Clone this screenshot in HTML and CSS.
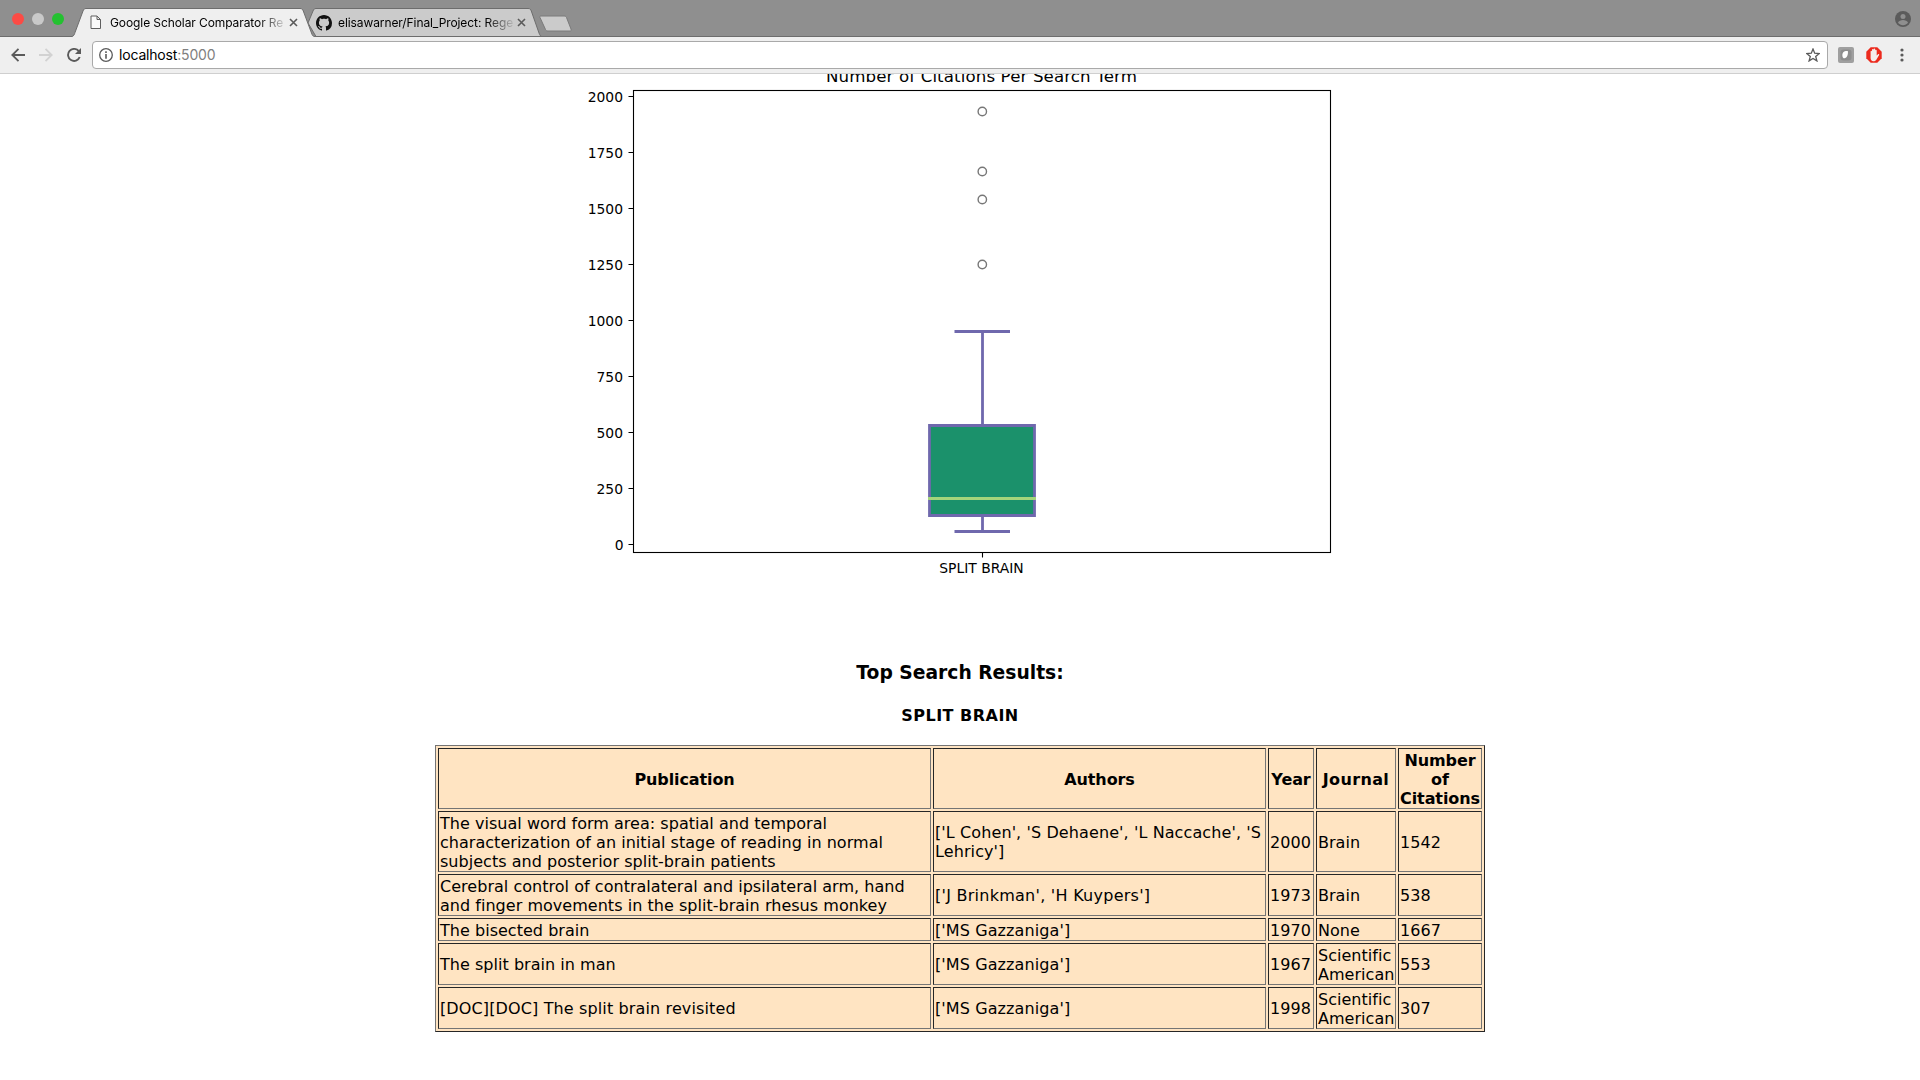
FILE: index.html
```html
<!DOCTYPE html>
<html lang="en">
<head>
<meta charset="utf-8">
<title>Google Scholar Comparator Results</title>
<link rel="stylesheet" href="styles.css">
</head>
<body>
<header class="browser">
  <div class="tabstrip">
    <div class="lights"><i class="light red"></i><i class="light grey"></i><i class="light green"></i></div>
    <div class="tab tab-active">
      <svg class="tab-shape" width="244" height="29" viewBox="0 0 244 29"><path d="M0 28.5C2 28 2.500 26 3 24.500L11 3C11.800 1 12.500 .5 14 .5H228C229.800 .5 230.500 1 231.300 3L239.500 25C240.300 27.500 241 28.500 243 28.500V29H0Z" fill="#efefef"/><path d="M0 28.5C2 28 2.500 26 3 24.500L11 3C11.800 1 12.500 .5 14 .5H228C229.800 .5 230.500 1 231.300 3L239.500 25C240.300 27.500 241 28.500 243 28.500" fill="none" stroke="#6d6d6d"/></svg>
      <svg class="page-icon" width="12" height="15" viewBox="0 0 12 15"><path d="M1 1H7L10.500 4.500V13.500H1ZM7 1V4.500H10.500" fill="#fafafa" stroke="#5f5f5f"/></svg>
      <span class="tab-title">Google Scholar Comparator Re</span>
      <svg class="close" width="9" height="9" viewBox="0 0 9 9"><path d="M1 1L8 8M8 1L1 8" stroke="#5a5a5a" stroke-width="1.6"/></svg>
    </div>
    <div class="tab tab-back">
      <svg class="tab-shape" width="235" height="29" viewBox="0 0 235 29"><path d="M0 15L5 3C5.800 1 6.500 .5 8 .5H220C222 .5 222.500 1 223.300 3L231 25C232 27.500 232.500 28.500 234 28.500H8Z" fill="#cbcbcb" stroke="#6d6d6d"/></svg>
      <svg class="github" width="16" height="16" viewBox="0 0 16 16"><path fill="#111" d="M8 0C3.580 0 0 3.580 0 8c0 3.540 2.290 6.530 5.470 7.590.4.070.55-.17.55-.38 0-.19-.01-.82-.01-1.490-2.010.37-2.530-.49-2.690-.94-.09-.23-.48-.94-.82-1.130-.28-.15-.68-.52-.01-.53.63-.01 1.080.58 1.230.82.72 1.210 1.870.87 2.330.66.070-.52.28-.87.51-1.070-1.780-.2-3.640-.89-3.640-3.950 0-.87.31-1.590.82-2.150-.08-.2-.36-1.020.08-2.120 0 0 .67-.21 2.200.82.64-.18 1.320-.27 2-.27s1.360.09 2 .27c1.530-1.040 2.200-.82 2.200-.82.44 1.100.16 1.920.08 2.120.51.56.82 1.270.82 2.150 0 3.070-1.870 3.750-3.650 3.950.29.25.54.73.54 1.480 0 1.070-.01 1.930-.01 2.200 0 .21.15.46.55.38A8.010 8.010 0 0 0 16 8c0-4.420-3.580-8-8-8z"/></svg>
      <span class="tab-title">elisawarner/Final_Project: Rege</span>
      <svg class="close" width="9" height="9" viewBox="0 0 9 9"><path d="M1 1L8 8M8 1L1 8" stroke="#5a5a5a" stroke-width="1.6"/></svg>
    </div>
    <svg class="new-tab" width="34" height="18" viewBox="0 0 34 18"><path d="M3 1H26C27.500 1 28 1.500 28.500 2.500L33 14C33.500 15.500 33 16 32 16H10C8.500 16 8 15.500 7.500 14.500L2 2.500C1.600 1.500 2 1 3 1Z" fill="#cbcbcb" stroke="#7a7a7a"/></svg>
    <svg class="user" width="16" height="16" viewBox="0 0 16 16"><circle cx="8" cy="8" r="8" fill="#5b5b5b"/><circle cx="8" cy="5.400" r="2.500" fill="#8f8f8f"/><path d="M3 11.700C3.500 9.800 6 9 8 9S12.500 9.800 13 11.700C11.800 13.300 10 14.200 8 14.200S4.200 13.300 3 11.700Z" fill="#8f8f8f"/></svg>
  </div>
  <div class="toolbar">
    <svg class="nav" width="14" height="14" viewBox="0 0 14 14"><path d="M14 7H1.500M7.500 .8L1.300 7L7.500 13.200" fill="none" stroke="#5a5a5a" stroke-width="1.800"/></svg>
    <svg class="nav" width="14" height="14" viewBox="0 0 14 14"><path d="M0 7H12.500M6.500 .8L12.700 7L6.500 13.200" fill="none" stroke="#d2d2d2" stroke-width="1.800"/></svg>
    <svg class="nav" width="14" height="14" viewBox="0 0 14 14"><path d="M11.800 3.200A6 6 0 1 0 12.700 9" fill="none" stroke="#5a5a5a" stroke-width="1.900"/><path d="M14 0V6H8Z" fill="#5a5a5a"/></svg>
    <div class="omnibox">
      <svg width="14" height="14" viewBox="0 0 14 14"><circle cx="7" cy="7" r="6.300" fill="none" stroke="#5a5a5a" stroke-width="1.300"/><path d="M7 6V10.800M7 3.200V4.900" stroke="#5a5a5a" stroke-width="1.600"/></svg>
      <span class="url">localhost<span class="port">:5000</span></span>
      <svg class="star" width="14" height="14" viewBox="0 0 14 14"><path d="M7 1L8.700 5.200L13.200 5.500L9.700 8.400L10.900 12.900L7 10.400L3.100 12.900L4.300 8.400L.8 5.500L5.300 5.200Z" fill="none" stroke="#5a5a5a" stroke-width="1.300"/></svg>
    </div>
    <svg class="ext" width="16" height="16" viewBox="0 0 16 16"><rect width="16" height="16" rx="2" fill="#9f9f9f"/><rect x="2.500" y="2.500" width="11" height="11" rx="3" fill="#8e8e8e"/><path d="M4.500 9.500C3.800 5.500 6 3.700 9.800 4C10.500 7 9 11 6.500 11.300C5.500 11.400 4.700 10.700 4.500 9.500Z" fill="#fff"/></svg>
    <svg class="hand" width="16" height="16" viewBox="0 0 16 16"><path d="M4.700 .3H11.300L15.700 4.700V11.300L11.300 15.700H4.700L.3 11.300V4.700Z" fill="#ec2a1d"/><path d="M4.600 8V4.500C4.600 3.500 6 3.500 6 4.500V2.800C6 1.800 7.600 1.800 7.600 2.800V2.300C7.600 1.300 9.200 1.300 9.200 2.300V3.500C9.200 2.600 10.700 2.600 10.700 3.500V8.500L12 7.300C12.800 6.700 13.600 7.500 13 8.300L10.300 12.700C9.500 14 8.500 14.300 7.500 14.300C5.500 14.300 4.600 12.500 4.600 11Z" fill="#f4eeee"/></svg>
    <svg class="dots" width="4" height="14" viewBox="0 0 4 14"><g fill="#5a5a5a"><circle cx="2" cy="2" r="1.600"/><circle cx="2" cy="7" r="1.600"/><circle cx="2" cy="12" r="1.600"/></g></svg>
  </div>
</header>
<main class="page">
  <svg class="chart" width="780" height="526" viewBox="570 74 780 526">
    <text class="chart-title" x="981.500" y="82" text-anchor="middle">Number of Citations Per Search Term</text>
    <rect x="633.500" y="90.500" width="697" height="462" fill="none" stroke="#000" stroke-width="1.100"/>
    <path d="M628.500 96.500h5M628.500 152.500h5M628.500 208.500h5M628.500 264.500h5M628.500 320.500h5M628.500 376.500h5M628.500 432.500h5M628.500 488.500h5M628.500 544.500h5M982.500 552.500v5" stroke="#000" stroke-width="1.100"/>
    <g class="tick" text-anchor="end">
      <text x="623" y="102">2000</text><text x="623" y="158">1750</text><text x="623" y="214">1500</text><text x="623" y="270">1250</text><text x="623" y="326">1000</text><text x="623" y="382">750</text><text x="623" y="438">500</text><text x="623" y="494">250</text><text x="623.500" y="550">0</text>
    </g>
    <text class="tick" x="981.500" y="573" text-anchor="middle">SPLIT BRAIN</text>
    <g fill="none" stroke="#777" stroke-width="1.400"><circle cx="982.300" cy="111.500" r="4.200"/><circle cx="982.300" cy="171.500" r="4.200"/><circle cx="982.300" cy="199.500" r="4.200"/><circle cx="982.300" cy="264.500" r="4.200"/></g>
    <rect x="929.500" y="425.500" width="105" height="90" fill="#1b916b"/>
    <path d="M982.500 331.500V425.500M982.500 515.500V531.500M954.500 331.500H1010M954.500 531.500H1010M929.500 425.500H1034.500V515.500H929.500Z" fill="none" stroke="#6f68ad" stroke-width="2.800"/>
    <path d="M928 498.500H1036" stroke="#a3d57b" stroke-width="2.800"/>
  </svg>
  <h3 class="heading">Top Search Results:</h3>
  <h4 class="term">SPLIT BRAIN</h4>
  <table class="results" border="1">
    <colgroup><col class="c-pub"><col class="c-auth"><col class="c-year"><col class="c-jour"><col class="c-cite"></colgroup>
    <tr><th>Publication</th><th>Authors</th><th>Year</th><th class="journal">Journal</th><th>Number<br>of<br>Citations</th></tr>
    <tr><td>The visual word form area: spatial and temporal<br>characterization of an initial stage of reading in normal<br>subjects and posterior split-brain patients</td><td class="authors short">['L Cohen', 'S Dehaene', 'L Naccache', 'S<br>Lehricy']</td><td>2000</td><td>Brain</td><td>1542</td></tr>
    <tr><td>Cerebral control of contralateral and ipsilateral arm, hand<br>and finger movements in the split-brain rhesus monkey</td><td class="authors pair short">['J Brinkman', 'H Kuypers']</td><td class="short">1973</td><td class="short">Brain</td><td class="short">538</td></tr>
    <tr><td>The bisected brain</td><td class="authors">['MS Gazzaniga']</td><td>1970</td><td>None</td><td>1667</td></tr>
    <tr><td class="short">The split brain in man</td><td class="authors short">['MS Gazzaniga']</td><td class="short">1967</td><td>Scientific<br>American</td><td class="short">553</td></tr>
    <tr><td class="doc short">[DOC][DOC] The split brain revisited</td><td class="authors short">['MS Gazzaniga']</td><td class="short">1998</td><td>Scientific<br>American</td><td class="short">307</td></tr>
  </table>
</main>
</body>
</html>
```
FILE: styles.css
```css
* { box-sizing: border-box; }
body {
  margin: 0;
  height: 1080px;
  overflow: hidden;
  background: #fff;
  color: #000;
  font: 16px/19px "DejaVu Sans", sans-serif;
}
svg { display: block; flex: none; }
.browser { font-family: Inter, sans-serif; }
.tabstrip {
  display: flex;
  height: 37px;
  padding: 8px 9px 0 12px;
  background: #8f8f8f;
  border-bottom: 1px solid #6d6d6d;
}
.lights { display: flex; gap: 8px; margin-top: 5px; width: 60px; }
.light { width: 12px; height: 12px; border-radius: 50%; }
.red { background: #fc4b45; }
.grey { background: #c9c9c9; }
.green { background: #23c130; }
.tab {
  position: relative;
  display: flex;
  align-items: center;
  height: 29px;
  font-size: 12px;
  letter-spacing: -0.09px;
}
.tab-shape { position: absolute; left: 0; top: 0; }
.tab > :not(.tab-shape) { position: relative; }
.tab-active { z-index: 1; width: 244px; padding-left: 18px; }
.tab-back { width: 234px; margin-left: -8px; padding-left: 8px; }
.tab-title {
  flex: none;
  overflow: hidden;
  white-space: nowrap;
  width: 175px;
  margin-left: 8px;
  -webkit-mask-image: linear-gradient(90deg, #000 148px, transparent 178px);
  mask-image: linear-gradient(90deg, #000 148px, transparent 178px);
}
.tab-back .tab-title { margin-left: 6px; }
.close { margin-left: 4px; }
.new-tab { margin: 7px 0 0 -4px; }
.user { margin: 3px 0 0 auto; }
.toolbar {
  display: flex;
  align-items: center;
  height: 37px;
  padding: 0 16px 0 11px;
  background: #efefef;
  border-bottom: 1px solid #cfcfcf;
}
.nav { margin-right: 14px; }
.omnibox {
  display: flex;
  align-items: center;
  width: 1736px;
  height: 28px;
  margin-left: -3px;
  padding: 0 7px 0 6px;
  background: #fff;
  border: 1px solid #a9a9a9;
  border-radius: 4px;
}
.url { margin-left: 6px; padding-bottom: 1px; font-size: 14px; letter-spacing: -0.18px; }
.port { color: #808080; }
.star { margin-left: auto; }
.ext { margin-left: 10px; }
.hand { margin-left: 12px; }
.dots { margin-left: 18px; }
.page { display: flex; flex-direction: column; align-items: center; }
.chart { overflow: hidden; }
.chart-title { font-size: 16.67px; letter-spacing: 0.11px; }
.tick { font-size: 13.89px; }
.heading { margin: 61px 0 0; font-size: 18.72px; line-height: 24px; }
.term { margin: 21px 0 0; font-size: 16px; line-height: 19px; letter-spacing: 0.48px; }
.results {
  table-layout: fixed;
  width: 1050px;
  margin-top: 20px;
  border: 1px solid;
  border-color: #757575 #262626 #262626 #757575;
  border-spacing: 2px;
  background: #ffe4c2;
}
.results th, .results td {
  padding: 2px 1px 0;
  border: 1px solid;
  border-color: #262626 #757575 #757575 #262626;
  white-space: nowrap;
}
.results th { letter-spacing: -0.1px; }
.results .journal { letter-spacing: 0.35px; }
.results td { letter-spacing: 0.03px; }
.results .authors { letter-spacing: 0.1px; }
.results .pair { letter-spacing: 0.26px; }
.results .doc { letter-spacing: 0.13px; }
.results .short { padding: 1px; }
.c-pub { width: 493px; }
.c-auth { width: 333px; }
.c-year { width: 46px; }
.c-jour { width: 80px; }
.c-cite { width: 84px; }
```
